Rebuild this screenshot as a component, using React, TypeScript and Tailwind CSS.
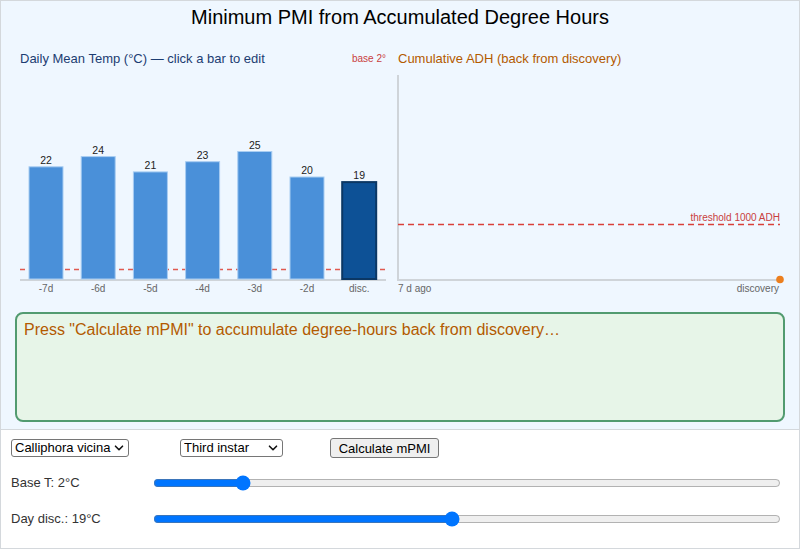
import React, { useState } from "react";

const temps = [22, 24, 21, 23, 25, 20, 19];
const labels = ["-7d", "-6d", "-5d", "-4d", "-3d", "-2d", "disc."];

function Chevron() {
  return (
    <svg width="10" height="10" viewBox="0 0 10 10" className="pointer-events-none absolute right-[5px] top-[5px]">
      <path d="M1.5 3.2 L5 6.7 L8.5 3.2" fill="none" stroke="#111" strokeWidth="1.6" strokeLinecap="round" strokeLinejoin="round" />
    </svg>
  );
}

export default function App() {
  const [baseT, setBaseT] = useState(2);
  const [disc, setDisc] = useState(19);
  const zero = 279;
  const k = 5.1;
  return (
    <div className="w-[800px] h-[549px] border border-[#d4d8dc] flex flex-col font-['Liberation_Sans',Arial,sans-serif] overflow-hidden">
      <div className="bg-[#eff7ff] flex flex-col pb-[7px]">
        <div className="h-[31px] flex items-center justify-center text-[20px] text-black leading-none">
          Minimum PMI from Accumulated Degree Hours
        </div>
        <div className="flex h-[268px]">
          <svg width="392" height="268" className="block">
            <g transform="translate(-1,-32)" fontFamily="'Liberation Sans', Arial, sans-serif">
              <text x="20" y="62.5" fontSize="13" fill="#1c3d72">Daily Mean Temp (°C) — click a bar to edit</text>
              <text x="386" y="61.5" fontSize="10" fill="#c94040" textAnchor="end">base 2°</text>
              <line x1="20" y1="280" x2="386" y2="280" stroke="#cfd4d9" strokeWidth="2" />
              <line x1="20" y1="269.5" x2="386" y2="269.5" stroke="#e05a50" strokeWidth="1.5" strokeDasharray="5 4" />
              {temps.map((v, i) => {
                const x = 29 + i * 52.2;
                const h = v * k;
                const last = i === temps.length - 1;
                return (
                  <g key={i}>
                    <rect
                      x={x}
                      y={zero - h}
                      width={34}
                      height={h}
                      fill={last ? "#0d5196" : "#4a90d9"}
                      stroke={last ? "#0b3764" : "#a8cdf2"}
                      strokeWidth={last ? 2 : 1}
                    />
                    <text x={x + 17} y={zero - h - 3} fontSize="10.5" fill="#222" textAnchor="middle">{v}</text>
                    <text x={x + 17} y="292" fontSize="10" fill="#666" textAnchor="middle">{labels[i]}</text>
                  </g>
                );
              })}
            </g>
          </svg>
          <svg width="406" height="268" className="block">
            <g transform="translate(-393,-32)" fontFamily="'Liberation Sans', Arial, sans-serif">
              <text x="398" y="62.5" fontSize="13" fill="#b35a00">Cumulative ADH (back from discovery)</text>
              <line x1="398" y1="75" x2="398" y2="280" stroke="#cfd4d9" strokeWidth="2" />
              <line x1="397" y1="280" x2="780" y2="280" stroke="#cfd4d9" strokeWidth="2" />
              <line x1="398" y1="224.5" x2="780" y2="224.5" stroke="#d9403a" strokeWidth="1.3" strokeDasharray="6 4" />
              <text x="780" y="221" fontSize="10" fill="#c94040" textAnchor="end">threshold 1000 ADH</text>
              <circle cx="780" cy="279.5" r="3.8" fill="#ec7f1e" />
              <text x="398" y="292" fontSize="10" fill="#666">7 d ago</text>
              <text x="779" y="292" fontSize="10" fill="#666" textAnchor="end">discovery</text>
            </g>
          </svg>
        </div>
        <div className="mt-[12px] mx-[14px] h-[110px] border-2 border-[#529b70] rounded-[8px] bg-[#e7f5e8] px-[7px] pt-[7px]">
          <div className="text-[16px] text-[#b35a00] leading-[18px]">
            Press "Calculate mPMI" to accumulate degree-hours back from discovery…
          </div>
        </div>
      </div>
      <div className="flex-1 bg-white border-t border-[#d4d8dc] px-[10px] pt-[8px] text-[13px] text-[#333]">
        <div className="flex items-start h-[20px]">
          <div className="w-[169px]">
            <span className="relative inline-block">
              <select className="appearance-none w-[118px] h-[18px] border border-[#767676] rounded-[3px] bg-white pl-[3px] pr-[14px] text-[13px] leading-[16px] text-black">
                <option>Calliphora vicina</option>
                <option>Lucilia sericata</option>
              </select>
              <Chevron />
            </span>
          </div>
          <div className="w-[150px]">
            <span className="relative inline-block">
              <select className="appearance-none w-[103px] h-[18px] border border-[#767676] rounded-[3px] bg-white pl-[3px] pr-[14px] text-[13px] leading-[16px] text-black">
                <option>Third instar</option>
                <option>Pupa</option>
              </select>
              <Chevron />
            </span>
          </div>
          <button className="w-[109px] h-[20px] border border-[#767676] rounded-[3px] bg-[#efefef] text-[13px] text-black leading-none">
            Calculate mPMI
          </button>
        </div>
        <div className="flex items-center h-[20px] mt-[15px]">
          <div className="w-[142px]">Base T: {baseT}°C</div>
          <input
            type="range"
            min={0}
            max={15}
            value={baseT}
            onChange={(e) => setBaseT(Number(e.target.value))}
            className="w-[628px] h-[20px] m-0 accent-[#0075ff]"
          />
        </div>
        <div className="flex items-center h-[20px] mt-[16px]">
          <div className="w-[142px]">Day disc.: {disc}°C</div>
          <input
            type="range"
            min={0}
            max={40}
            value={disc}
            onChange={(e) => setDisc(Number(e.target.value))}
            className="w-[628px] h-[20px] m-0 accent-[#0075ff]"
          />
        </div>
      </div>
    </div>
  );
}
